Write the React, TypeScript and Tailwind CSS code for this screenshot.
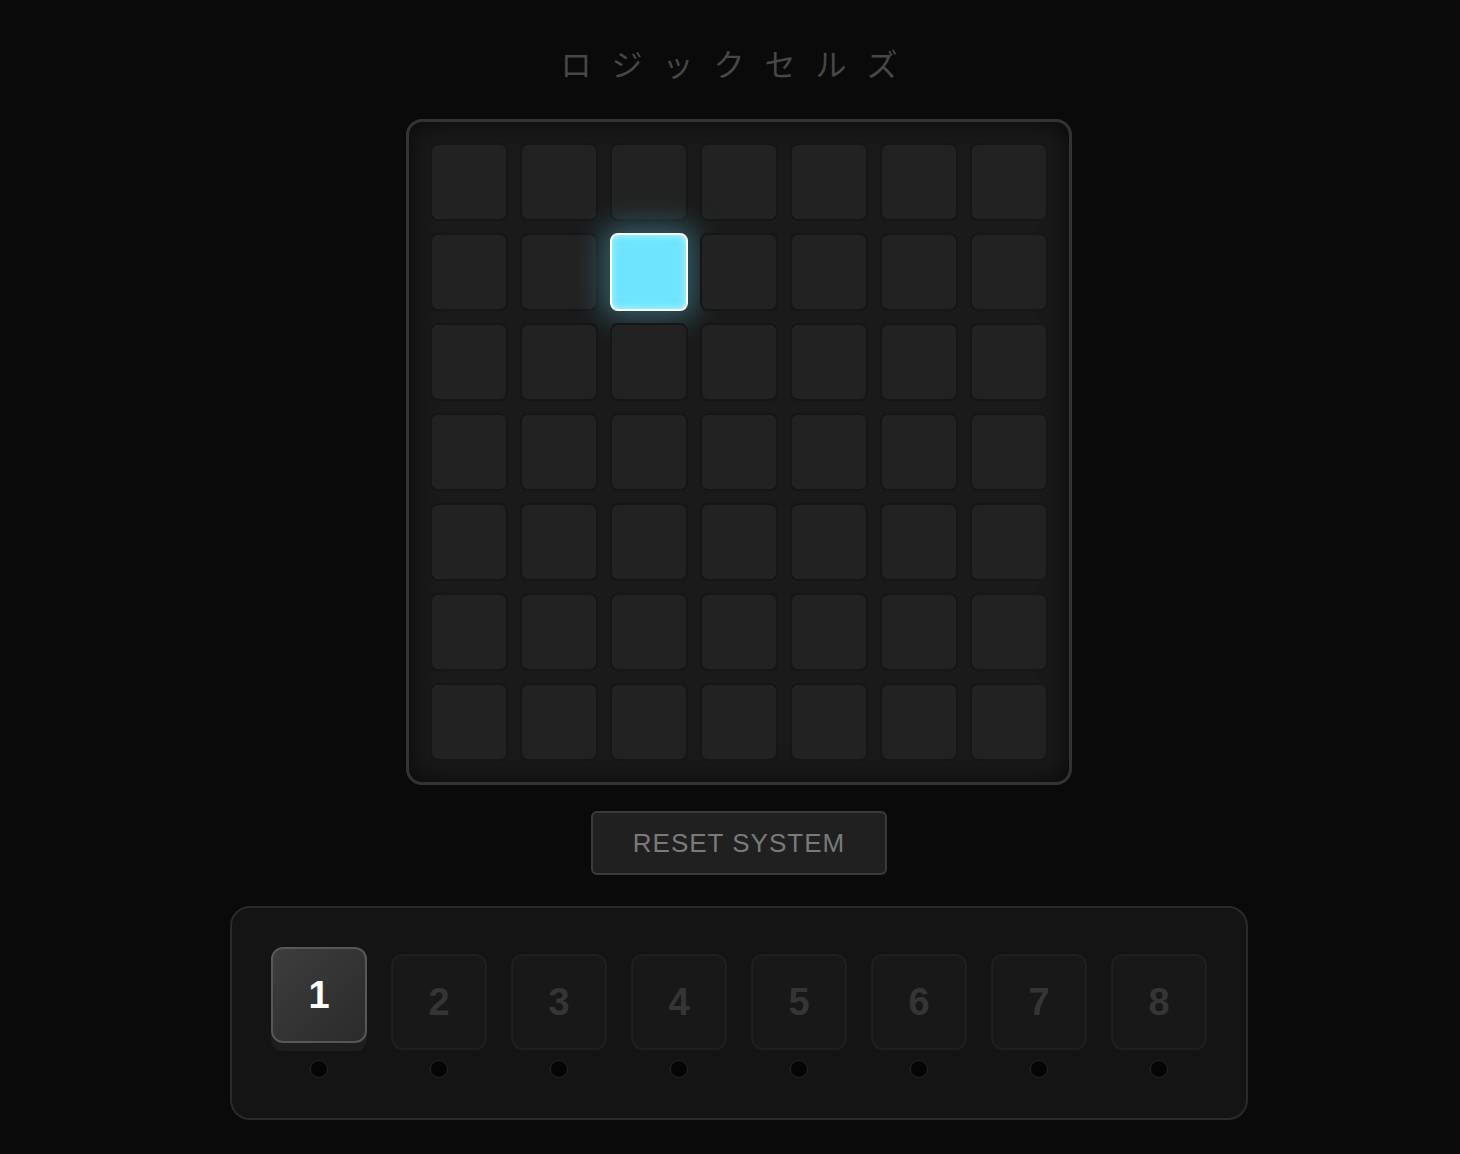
import React from 'react';

// ==================== DATA ====================

const SIZE = 7;
const ACTIVE_CELL = { row: 1, col: 2 };
const SLOTS = [1, 2, 3, 4, 5, 6, 7, 8];
const CURRENT_SLOT = 1;

// ==================== PIECES ====================

const Cell: React.FC<{ lit: boolean }> = ({ lit }) => {
  if (lit) {
    return (
      <div className="w-[78px] h-[78px] rounded-lg bg-[#6ee5fd] border-2 border-white shadow-[0_0_28px_8px_rgba(100,220,250,0.35),inset_0_0_8px_rgba(255,255,255,0.55)]" />
    );
  }
  return <div className="w-[78px] h-[78px] rounded-lg bg-[#222222] border-2 border-[#161616]" />;
};

const SlotButton: React.FC<{ n: number; active: boolean }> = ({ n, active }) => {
  return (
    <div className="flex flex-col items-center gap-[10px]">
      <button
        type="button"
        className={`
          w-[96px] h-[96px] flex items-center justify-center rounded-xl font-bold text-[38px]
          ${active
            ? '-translate-y-[7px] bg-gradient-to-br from-[#3d3d3d] to-[#2b2b2b] border-2 border-[#575757] text-white shadow-[0_8px_0_#1e1e1e]'
            : 'bg-[#181818] border-2 border-[#1f1f1f] text-[#353535]'
          }
        `}
      >
        {n}
      </button>
      <span className="w-[18px] h-[18px] rounded-full bg-[#050505] border border-[#262626]" />
    </div>
  );
};

// ==================== APP ====================

export default function App() {
  return (
    <div
      className="min-h-screen bg-[#0a0a0a] flex flex-col items-center pl-[18px] pt-[42px]"
      style={{ fontFamily: '"Liberation Sans", Arial, "Noto Sans CJK JP", sans-serif' }}
    >
      {/* Title */}
      <h1
        className="text-[31px] leading-[42px] tracking-[20px] text-[#474747] font-normal"
        style={{ fontFamily: '"Noto Sans CJK JP", sans-serif' }}
      >
        ロジックセルズ
      </h1>

      {/* Board */}
      <div className="mt-[35px] w-[666px] h-[666px] rounded-2xl border-[3px] border-[#333333] bg-[#1a1a1a] shadow-[inset_0_0_28px_rgba(0,0,0,0.7)] flex items-center justify-center">
        <div className="grid grid-cols-7 gap-3">
          {Array.from({ length: SIZE * SIZE }).map((_, i) => {
            const row = Math.floor(i / SIZE);
            const col = i % SIZE;
            return <Cell key={i} lit={row === ACTIVE_CELL.row && col === ACTIVE_CELL.col} />;
          })}
        </div>
      </div>

      {/* Reset */}
      <button
        type="button"
        className="mt-[26px] w-[296px] h-[64px] rounded-md bg-[#202020] border-2 border-[#3a3a3a] text-[#7a7a7a] text-[26px] tracking-[1px]"
      >
        RESET SYSTEM
      </button>

      {/* Slots */}
      <div className="mt-[31px] w-[1018px] h-[214px] rounded-[20px] bg-[#141414] border-2 border-[#2a2a2a] flex items-start justify-center gap-6 pt-[46px]">
        {SLOTS.map((n) => (
          <SlotButton key={n} n={n} active={n === CURRENT_SLOT} />
        ))}
      </div>
    </div>
  );
}
